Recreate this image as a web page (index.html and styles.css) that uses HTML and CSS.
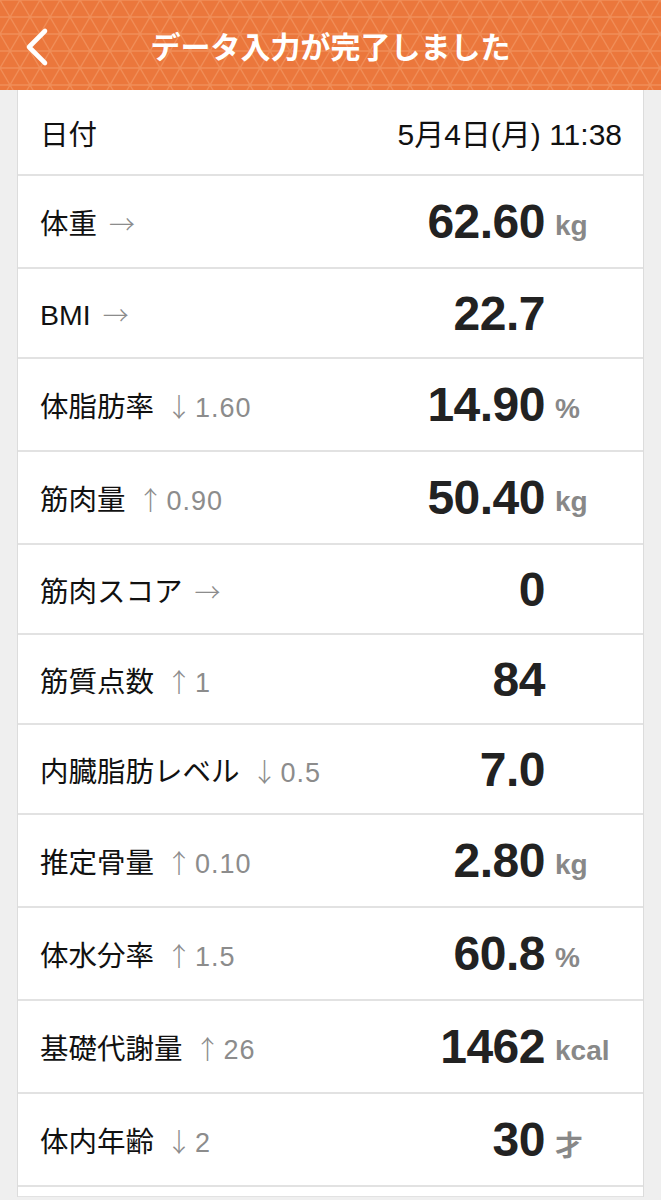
FILE: index.html
```html
<!DOCTYPE html>
<html lang="ja">
  <head>
    <meta charset="utf-8" />
    <meta name="viewport" content="width=device-width, initial-scale=1" />
    <title>データ入力が完了しました</title>
    <link rel="stylesheet" href="styles.css">
  </head>
  <body>
    <header class="navbar">
      <svg class="navbar-pattern" width="100%" height="100%" aria-hidden="true">
        <defs>
          <pattern id="tri" width="20" height="34" patternUnits="userSpaceOnUse">
            <path d="M0 0H20M0 17H20M0 34H20M0 0L20 34M20 0L0 34" stroke="#f49c6a" stroke-opacity="0.6" stroke-width="1.3" fill="none" />
          </pattern>
        </defs>
        <rect width="100%" height="100%" fill="url(#tri)" />
      </svg>
      <a class="back" href="#">
        <svg width="24" height="40" viewBox="0 0 24 40">
          <polyline points="20,4 4,20 20,36" fill="none" stroke="#fff" stroke-width="4.6" stroke-linecap="round" stroke-linejoin="round" />
        </svg>
      </a>
      <h1 class="title">データ入力が完了しました</h1>
    </header>

    <main class="card">
      <div class="row row-date">
        <span class="label">日付</span>
        <span class="date">5月4日(月) 11:38</span>
      </div>

      <div class="row row-unit">
        <span class="label">体重<span class="arrow">→</span></span>
        <span class="value">62.60</span>
        <span class="unit">kg</span>
      </div>
      <div class="row">
        <span class="label">BMI<span class="arrow">→</span></span>
        <span class="value">22.7</span>
        <span class="unit"></span>
      </div>
      <div class="row row-unit">
        <span class="label">体脂肪率<span class="arrow">↓</span><span class="delta">1.60</span></span>
        <span class="value">14.90</span>
        <span class="unit">%</span>
      </div>
      <div class="row row-unit">
        <span class="label">筋肉量<span class="arrow">↑</span><span class="delta">0.90</span></span>
        <span class="value">50.40</span>
        <span class="unit">kg</span>
      </div>
      <div class="row">
        <span class="label">筋肉スコア<span class="arrow">→</span></span>
        <span class="value">0</span>
        <span class="unit"></span>
      </div>
      <div class="row">
        <span class="label">筋質点数<span class="arrow">↑</span><span class="delta">1</span></span>
        <span class="value">84</span>
        <span class="unit"></span>
      </div>
      <div class="row">
        <span class="label">内臓脂肪レベル<span class="arrow">↓</span><span class="delta">0.5</span></span>
        <span class="value">7.0</span>
        <span class="unit"></span>
      </div>
      <div class="row row-unit">
        <span class="label">推定骨量<span class="arrow">↑</span><span class="delta">0.10</span></span>
        <span class="value">2.80</span>
        <span class="unit">kg</span>
      </div>
      <div class="row row-unit">
        <span class="label">体水分率<span class="arrow">↑</span><span class="delta">1.5</span></span>
        <span class="value">60.8</span>
        <span class="unit">%</span>
      </div>
      <div class="row row-unit">
        <span class="label">基礎代謝量<span class="arrow">↑</span><span class="delta">26</span></span>
        <span class="value">1462</span>
        <span class="unit">kcal</span>
      </div>
      <div class="row row-unit">
        <span class="label">体内年齢<span class="arrow">↓</span><span class="delta">2</span></span>
        <span class="value">30</span>
        <span class="unit">才</span>
      </div>
      <div class="row-tail"></div>
    </main>
  </body>
</html>
```

FILE: styles.css
```css
body {
  margin: 0;
  background-color: #efefef;
  font-family: "Liberation Sans", "Noto Sans CJK JP", sans-serif;
  color: #111;
}

.navbar {
  position: relative;
  height: 90px;
  background-color: #eb773c;
  display: flex;
  align-items: center;
  justify-content: center;
  overflow: hidden;
}

.navbar-pattern {
  position: absolute;
  top: 0;
  left: 0;
}

.back {
  position: absolute;
  left: 25px;
  top: 27px;
  display: block;
  line-height: 0;
}

.title {
  position: relative;
  margin: 0;
  color: #fff;
  font-size: 30px;
  font-weight: bold;
}

.card {
  margin: 0 17px;
  background-color: #fff;
  border-left: 1px solid #dcdcdc;
  border-right: 1px solid #dcdcdc;
}

.row {
  box-sizing: border-box;
  height: 90px;
  display: grid;
  grid-template-columns: 1fr auto 98px;
  align-items: center;
  padding-left: 22px;
  border-bottom: 2px solid #e2e2e2;
}

.row-unit {
  height: 93px;
}

.row-date {
  height: 86px;
  grid-template-columns: 1fr auto;
  padding-right: 21px;
}

.row-tail {
  height: 9px;
  border-bottom: 1px solid #e2e2e2;
}

.label {
  font-size: 28.5px;
  white-space: nowrap;
}

.arrow {
  margin-left: 12px;
  font-family: "Noto Sans CJK JP", sans-serif;
  font-size: 26px;
  font-weight: 300;
  color: #8c8c8c;
}

.delta {
  margin-left: 3px;
  font-size: 27px;
  letter-spacing: 1px;
  color: #8c8c8c;
}

.date {
  font-size: 30px;
}

.value {
  font-size: 48px;
  font-weight: bold;
  color: #222;
  text-align: right;
  letter-spacing: -0.5px;
}

.unit {
  padding-left: 10px;
  padding-top: 8px;
  font-size: 28px;
  font-weight: bold;
  color: #888;
}
```
